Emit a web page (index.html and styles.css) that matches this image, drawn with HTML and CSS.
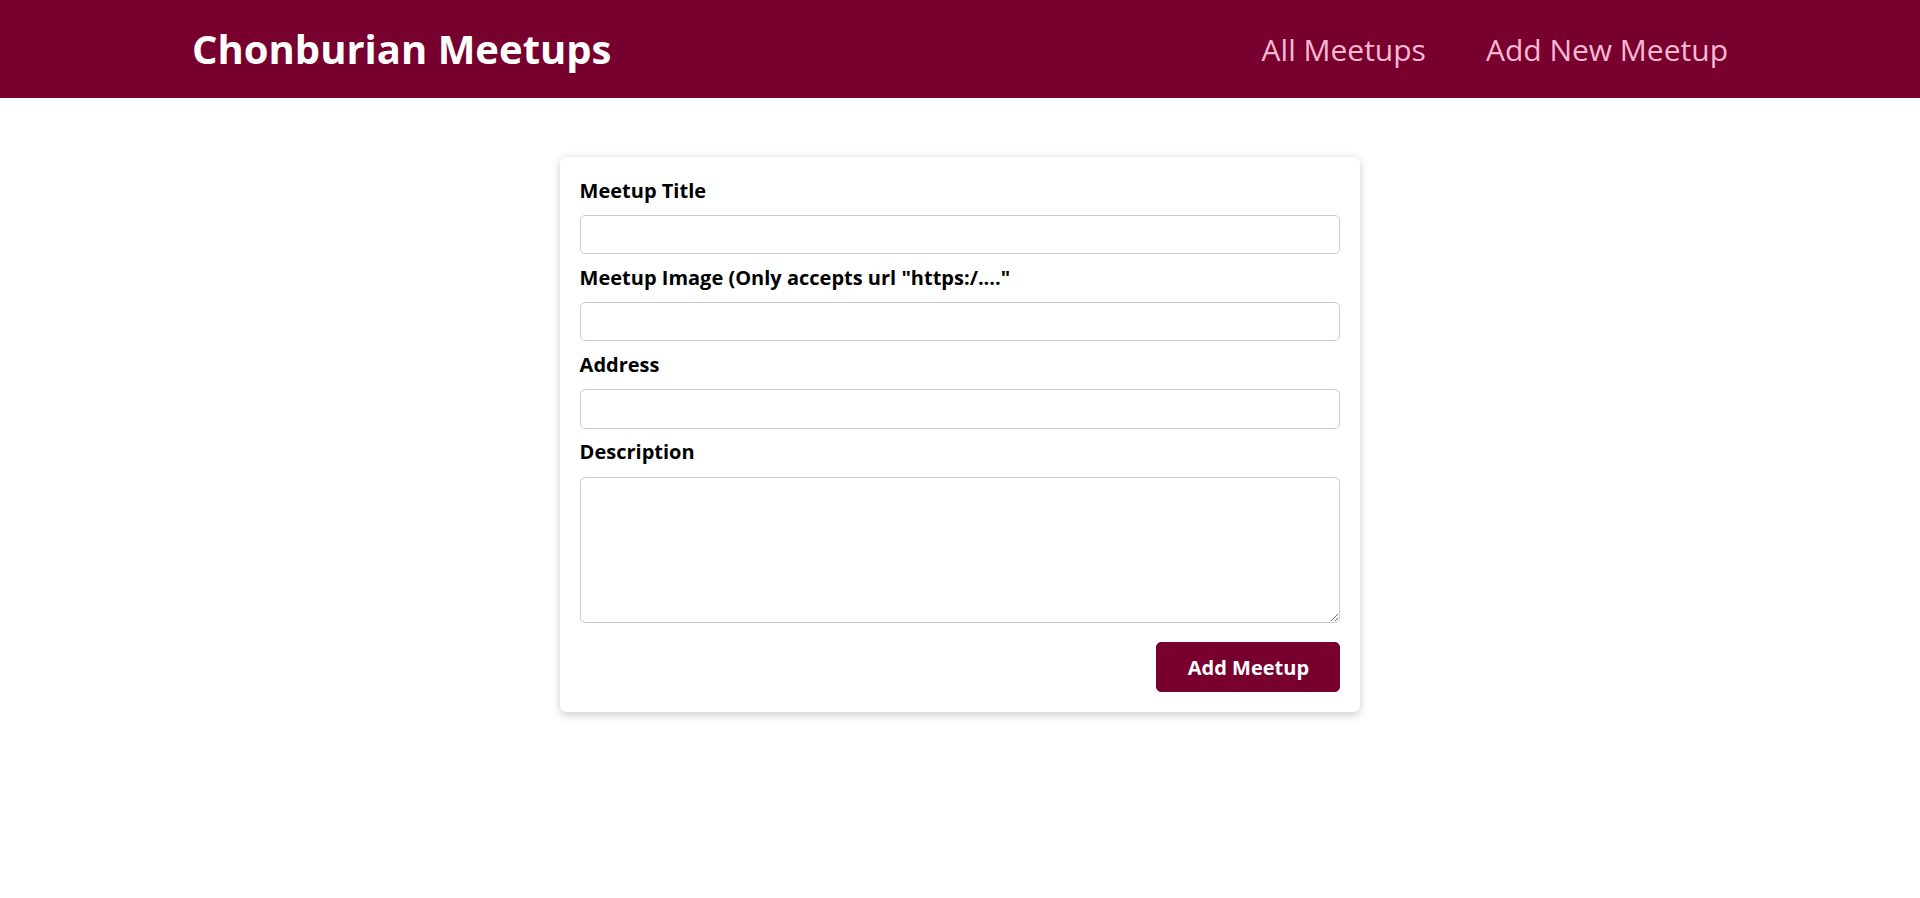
FILE: index.html
```html
<!DOCTYPE html>
<html lang="en">
<head>
<meta charset="utf-8">
<title>Chonburian Meetups</title>
<link rel="stylesheet" href="styles.css">
</head>
<body>
<header class="header">
  <div class="logo">Chonburian Meetups</div>
  <nav>
    <ul class="nav-list">
      <li><a href="#" class="nav-link">All Meetups</a></li>
      <li><a href="#" class="nav-link">Add New Meetup</a></li>
    </ul>
  </nav>
</header>
<main class="main">
  <div class="card">
    <form class="form">
      <div class="control">
        <label for="title">Meetup Title</label>
        <input type="text" id="title">
      </div>
      <div class="control">
        <label for="image">Meetup Image (Only accepts url "https:/...."</label>
        <input type="url" id="image">
      </div>
      <div class="control">
        <label for="address">Address</label>
        <input type="text" id="address">
      </div>
      <div class="control">
        <label for="description">Description</label>
        <textarea id="description" rows="5"></textarea>
      </div>
      <div class="actions">
        <button type="button" class="btn">Add Meetup</button>
      </div>
    </form>
  </div>
</main>
</body>
</html>
```
FILE: styles.css
```css
* { box-sizing: border-box; }
html { font-size: 20px; }
body {
  margin: 0;
  font-family: "Open Sans", "Noto Sans", sans-serif;
  color: #000;
  background: #fff;
}
.header {
  width: 100%;
  height: 98px;
  display: flex;
  align-items: center;
  justify-content: space-between;
  background-color: #77002e;
  padding: 0 10%;
}
.logo {
  font-size: 2rem;
  color: #fff;
  font-weight: bold;
  margin-top: -2px;
}
.nav-list {
  list-style: none;
  margin: 0;
  padding: 0;
  display: flex;
  align-items: baseline;
  gap: 3rem;
}
.nav-link {
  text-decoration: none;
  font-size: 1.5rem;
  color: #fcb8d2;
}
.main {
  margin: 59px auto;
  width: 800px;
}
.card {
  background: #fff;
  border-radius: 7px;
  box-shadow: 0 2.5px 10px rgba(0, 0, 0, 0.2);
}
.form {
  padding: 19.6px;
}
.control {
  margin-bottom: 9.5px;
}
.control label {
  display: block;
  font-weight: bold;
  line-height: 28.6px;
  margin-bottom: 9.8px;
}
.control input,
.control textarea {
  display: block;
  font: inherit;
  border-radius: 5px;
  border: 1px solid #ccc;
  padding: 4.9px;
  width: 100%;
  margin: 0;
}
.control input {
  height: 39.3px;
}
.control textarea {
  height: 146px;
}
.actions {
  margin-top: 19.6px;
  text-align: right;
}
.btn {
  font: inherit;
  font-weight: bold;
  cursor: pointer;
  background-color: #77002e;
  color: #fff;
  padding: 0;
  height: 50px;
  width: 184px;
  border: 1px solid #77002e;
  border-radius: 5px;
}
```
